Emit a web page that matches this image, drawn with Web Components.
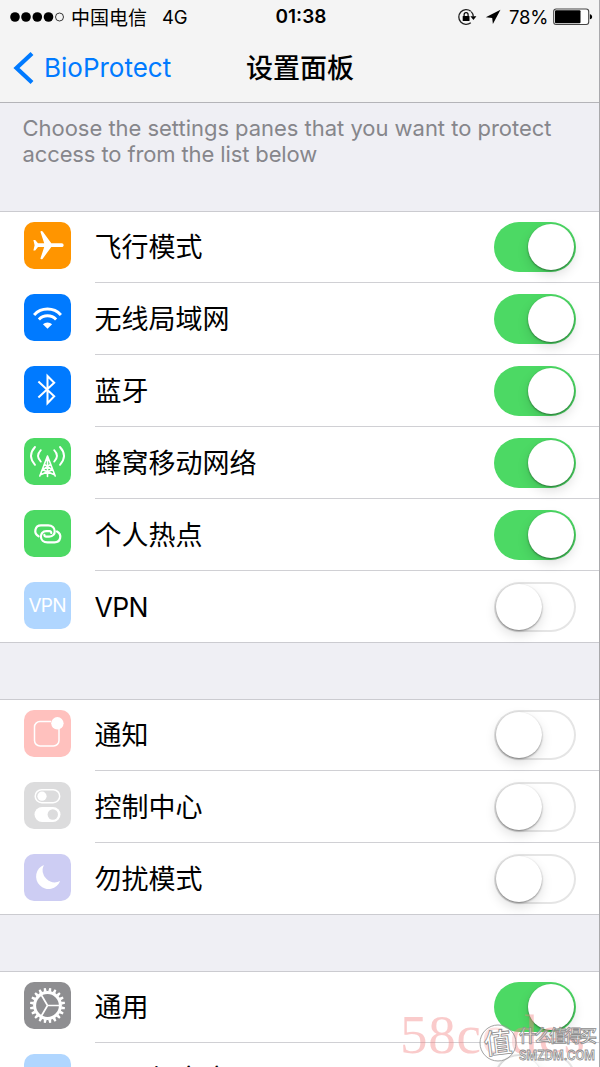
<!DOCTYPE html>
<html lang="zh-CN">
<head>
<meta charset="utf-8">
<title>设置面板</title>
<style>
html,body{margin:0;padding:0}
body{width:600px;height:1067px;overflow:hidden;background:#efeff4;font-family:Inter,"Noto Sans CJK SC",sans-serif;color:#000}
</style>
</head>
<body>
<settings-app></settings-app>
<script>
const define = (name, css, html) => {
  customElements.define(name, class extends HTMLElement {
    constructor() {
      super();
      const t = document.createElement('template');
      t.innerHTML = `<style>${css}</style>${typeof html === 'function' ? html(this) : html}`;
      this.attachShadow({ mode: 'open' }).append(t.content.cloneNode(true));
    }
  });
};

const gearTeeth = Array.from({ length: 20 }, (_, i) =>
  `<path d="M22 9.6 22.500 5.900h2l.5 3.700z" transform="rotate(${i * 18 + 9} 23.5 23.5)"/>`).join('');

const hotspotLink = '<path d="M14.600 26.300C9.200 23.300 10.800 15.400 17 15.400H24.200C32.400 15.400 33 26.600 25.200 26.600H22.200C20.800 26.600 20.200 25.700 20.400 24.800"/>';

const glyphs = {
  airplane: ['#ff9500', `<path fill="#fff" d="M37.6 21.3H27.3L18.700 9.600c-.6-.8-2.500-.7-2.200.4l3.700 11.300H14L11.2 18H9.4l1.2 5.2-1.2 5.2h1.8L14 25h6.200l-3.700 11.300c-.3 1.100 1.600 1.200 2.200.4L27.3 25h10.3c2.7 0 2.7-3.7 0-3.7z"/>`],
  wifi: ['#007aff', `<g fill="none" stroke="#fff" stroke-width="3"><path d="M10.1 20.9a18.3 18.3 0 0 1 26.8 0"/><path d="M14.9 25.5a12 12 0 0 1 17.2 0"/></g><path fill="#fff" d="M18.9 30.3a6.5 6.5 0 0 1 9.2 0l-4.6 4.5z"/>`],
  bluetooth: ['#007aff', `<path fill="none" stroke="#fff" stroke-width="2" d="M14.4 15.600 30.200 30.200 23.500 37.300V10l6.700 6.700-15.800 14.700"/>`],
  cellular: ['#4cd964', `<g fill="none" stroke="#fff" stroke-width="1.9" stroke-linecap="round"><path d="M11 9q-8 8.800 0 17.800M36 9q8 8.800 0 17.800M16.800 12.200q-5.500 5.800 0 11.400M30.200 12.200q5.500 5.800 0 11.400"/><path stroke-width="1.6" d="M23.5 18 15.8 38M23.5 18 31.2 38M23.5 18V38.5M20.5 26.5l7.8 5.3-11.8 5M26.5 26.5l-7.8 5.3 11.8 5"/></g>`],
  hotspot: ['#4cd964', `<g fill="none" stroke="#fff" stroke-width="2.2" stroke-linecap="round">${hotspotLink}<g transform="rotate(180 23.8 23.9)">${hotspotLink}</g></g>`],
  vpn: ['#b0d6ff', `<text x="23.5" y="30.300" text-anchor="middle" fill="#fff" font-family="Inter,sans-serif" font-size="19" textLength="38">VPN</text>`],
  bell: ['#ffc1be', `<path fill="none" stroke="#fff" stroke-width="1.5" d="M27 11.5H16a5.5 5.5 0 0 0-5.5 5.5v13.5A5.5 5.5 0 0 0 16 36h13.500a5.500 5.500 0 0 0 5.500-5.500V19"/><circle cx="33.4" cy="13.300" r="6.200" fill="#fff"/>`],
  control: ['#dcdcdd', `<rect x="11.200" y="7.700" width="24.500" height="13" rx="6.500" fill="none" stroke="#fff" stroke-width="1.500"/><circle cx="18" cy="14.200" r="4.600" fill="#fff"/><rect x="10.500" y="25" width="26" height="15" rx="7.500" fill="#fff"/><circle cx="28.800" cy="32.500" r="5.200" fill="#dcdcdd"/>`],
  moon: ['#cdcdf3', `<path fill="#fff" d="M19.800 10.900a12.500 12.500 0 1 0 16.400 16.200A12.300 12.300 0 0 1 19.800 10.900z"/>`],
  gear: ['#8e8e91', `<g fill="#fff">${gearTeeth}</g><circle cx="23.500" cy="23.500" r="12.900" fill="none" stroke="#fff" stroke-width="3"/><path d="M23.500 23.500H36M23.500 23.500 17.200 12.700M23.500 23.500 17.200 34.300" stroke="#fff" stroke-width="1.700"/>`],
  display: ['#b0d6ff', '']
};

define('app-icon', ':host{display:block;width:47px;height:47px;flex:none}svg{display:block}', el => {
  const [bg, art] = glyphs[el.getAttribute('name')];
  return `<svg width="47" height="47" viewBox="0 0 47 47"><rect width="47" height="47" rx="10" fill="${bg}"/>${art}</svg>`;
});

define('toggle-switch', `
:host{display:flex;box-sizing:border-box;width:82px;height:50px;border-radius:25px;padding:2px;flex:none;background:#fff;box-shadow:inset 0 0 0 2px #e5e5e5}
:host([on]){background:#4cd964;box-shadow:none;justify-content:flex-end}
i{width:46px;height:46px;border-radius:50%;background:#fff;box-shadow:0 1px 2px rgba(0,0,0,.42),0 5px 12px rgba(0,0,0,.13)}`, '<i></i>');

define('setting-row', `
:host{display:flex;height:72px;padding-left:24px;box-sizing:border-box}
.icon{padding-top:11px;width:70.500px;flex:none}
.body{flex:1;display:flex;justify-content:space-between;padding-right:24px;border-bottom:1px solid #d0d0d4;box-sizing:border-box}
:host(:last-of-type) .body{border-color:transparent}
.label{font-size:27px;line-height:73px;height:71px;white-space:nowrap}
:host([icon=vpn]) .label{font-size:26.500px;letter-spacing:-.6px}
toggle-switch{margin-top:11px}`, el => `
<div class="icon"><app-icon name="${el.getAttribute('icon')}"></app-icon></div>
<div class="body"><span class="label"><slot></slot></span><toggle-switch ${el.hasAttribute('on') ? 'on' : ''}></toggle-switch></div>`);

define('settings-group', `
:host{display:block;background:#fff;margin-bottom:56px;box-shadow:inset 0 1px #cbcbd0,inset 0 -1px #cbcbd0}`, '<slot></slot>');

define('group-note', `
:host{display:block;height:108px;box-sizing:border-box;padding:12px 22.500px 0;font-size:22px;line-height:26px;letter-spacing:-.03px;color:#86868b;white-space:nowrap}
::slotted(.second){letter-spacing:-.12px}`, '<slot></slot>');

define('status-bar', `
:host{display:grid;grid-template-columns:1fr auto 1fr;align-items:center;height:33px;padding:0 7px 0 9px;font-size:18px}
div{display:flex;align-items:center}
svg{display:block;flex:none}
.carrier{margin-left:7px;font-size:19px}.net{margin-left:15px;font-size:18.500px;letter-spacing:-.1px}
.time{font-weight:600;font-size:19px}
.right{justify-content:flex-end}
.pct{margin:0 5px 0 8px;font-size:18.500px;letter-spacing:-.3px}`, `
<div><svg width="55" height="12" viewBox="0 0 55 12"><circle cx="6" cy="6" r="4.800"/><circle cx="17" cy="6" r="4.800"/><circle cx="28.300" cy="6" r="4.800"/><circle cx="39.500" cy="6" r="4.800"/><circle cx="50.500" cy="6" r="4" fill="none" stroke="#222" stroke-width=".9"/></svg>
<span class="carrier">中国电信</span><span class="net">4G</span></div>
<span class="time">01:38</span>
<div class="right">
<svg width="20" height="18" viewBox="0 0 20 18"><path d="M13.800 3.200A7.400 7.400 0 1 0 13.800 14.800M14.200 3.600Q16.200 5.600 16.300 8.500" fill="none" stroke="#222" stroke-width="1.300"/><path d="M13.400 8.300h6l-3 3.600z"/><rect x="5.700" y="8" width="6.800" height="5" rx=".6"/><path d="M7.100 8V6.700a2 2 0 0 1 4 0V8" fill="none" stroke="#000" stroke-width="1.200"/></svg>
<svg style="margin-left:8px" width="16" height="16" viewBox="0 0 16 16"><path d="M15.500.8.800 8.300l6.400.8.700 6z"/></svg>
<span class="pct">78%</span>
<svg width="40" height="18" viewBox="0 0 40 18"><rect x=".7" y="1" width="35" height="15.500" rx="2.500" fill="#fff" stroke="#444" stroke-width="1.100"/><rect x="2" y="2.300" width="25.500" height="13" rx="1"/><path d="M36.900 6.200c3 .5 3 4.600 0 5.100z"/></svg></div>`);

define('nav-bar', `
:host{display:grid;grid-template-columns:1fr auto 1fr;align-items:center;height:69px;padding:0 13px}
.back{display:flex;align-items:center;color:#007aff;font-size:26px}
svg{display:block;margin-right:9px}
.title{font-size:27px;font-weight:500;margin-top:-2px}`, `
<div class="back"><svg width="22" height="34" viewBox="0 0 22 34"><path d="M19 2.500 3.500 17 19 31.500" fill="none" stroke="#007aff" stroke-width="4.200"/></svg><slot name="back"></slot></div>
<div class="title"><slot></slot></div>`);

define('page-watermark', `
:host{position:absolute;left:400px;top:1000px;width:200px;height:67px;overflow:hidden;pointer-events:none}
svg{display:block}`, `
<svg width="200" height="67" viewBox="0 0 200 67">
<text x="0" y="53" font-family="'Liberation Serif',serif" font-size="55" textLength="185" fill="#f28482" fill-opacity=".42">58codes</text>
<g fill="#fff" fill-opacity=".55" stroke="#8c8c8c" stroke-width=".8">
<circle cx="98" cy="43" r="18" fill-opacity=".4"/>
<text x="84" y="53" font-family="'Noto Sans CJK SC',sans-serif" font-weight="500" font-size="28" fill-opacity="1" transform="rotate(-7 98 43)">值</text>
<text x="119" y="42" font-family="'Noto Sans CJK SC',sans-serif" font-weight="500" font-size="17.500" textLength="78">什么值得买</text>
<text x="119" y="60" font-family="Inter,sans-serif" font-weight="600" font-size="12.500" textLength="76" lengthAdjust="spacingAndGlyphs">SMZDM.COM</text></g></svg>`);

define('settings-app', `
:host{display:block;position:relative;width:600px;height:1067px;overflow:hidden;box-sizing:border-box}
header{background:#f4f4f4;height:103px;box-sizing:border-box;border-bottom:1px solid #b4b4b8}
.edge{position:absolute;right:0;top:0;width:1px;height:1067px;background:#a9a9ac}`, `
<header><status-bar></status-bar><nav-bar><span slot="back">BioProtect</span>设置面板</nav-bar></header>
<group-note>Choose the settings panes that you want to protect<br><span class="second">access to from the list below</span></group-note>
<settings-group>
<setting-row icon="airplane" on>飞行模式</setting-row>
<setting-row icon="wifi" on>无线局域网</setting-row>
<setting-row icon="bluetooth" on>蓝牙</setting-row>
<setting-row icon="cellular" on>蜂窝移动网络</setting-row>
<setting-row icon="hotspot" on>个人热点</setting-row>
<setting-row icon="vpn">VPN</setting-row>
</settings-group>
<settings-group>
<setting-row icon="bell">通知</setting-row>
<setting-row icon="control">控制中心</setting-row>
<setting-row icon="moon">勿扰模式</setting-row>
</settings-group>
<settings-group>
<setting-row icon="gear" on>通用</setting-row>
<setting-row icon="display">显示与亮度</setting-row>
</settings-group>
<page-watermark></page-watermark><div class="edge"></div>`);
</script>
</body>
</html>
